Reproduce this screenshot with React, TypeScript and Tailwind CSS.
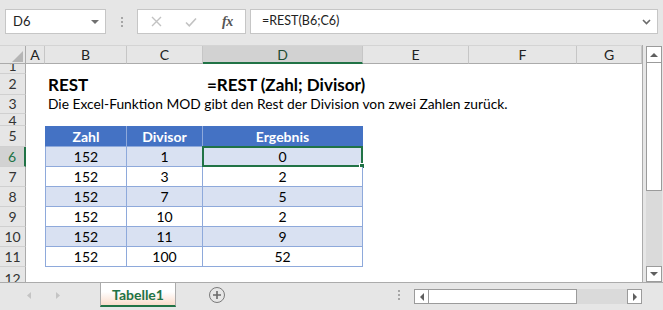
import React from 'react';

const cols = [
  { l: 'A', w: 'w-[19px]' },
  { l: 'B', w: 'w-[82px]' },
  { l: 'C', w: 'w-[76px]' },
  { l: 'D', w: 'w-[160px]' },
  { l: 'E', w: 'w-[106px]' },
  { l: 'F', w: 'w-[108px]' },
  { l: 'G', w: 'w-[65px]' },
];

function RowHead({ n, sel, cls }: { n: string; sel?: boolean; cls?: string }) {
  return (
    <div
      className={
        'w-[26px] shrink-0 flex justify-center overflow-hidden border-b border-[#d0d0d0] text-[14px] ' +
        (sel
          ? 'bg-[#d2d2d2] border-r-2 border-r-[#217346] text-[#217346] '
          : 'bg-[#e6e6e6] border-r border-r-[#ababab] text-[#333] ') +
        (cls ?? 'items-center')
      }
    >
      <span className="leading-none">{n}</span>
    </div>
  );
}

function TableRow({
  n,
  vals,
  band,
  sel,
}: {
  n: string;
  vals: string[];
  band?: boolean;
  sel?: boolean;
}) {
  const bg = band ? 'bg-[#d9e1f2]' : 'bg-white';
  return (
    <div className="flex h-[20px] shrink-0">
      <RowHead n={n} sel={sel} />
      <div className="w-[19px] shrink-0" />
      <div className={`w-[82px] shrink-0 ${bg} border-l border-r border-b border-[#8ea9db] flex items-center justify-center text-[14px]`}>
        {vals[0]}
      </div>
      <div className={`w-[76px] shrink-0 ${bg} border-r border-b border-[#8ea9db] flex items-center justify-center text-[14px]`}>
        {vals[1]}
      </div>
      <div className={`relative w-[160px] shrink-0 ${bg} border-r border-b border-[#8ea9db] flex items-center justify-center text-[14px]`}>
        {vals[2]}
        {sel && (
          <>
            <div className="absolute -left-px -top-px -right-px -bottom-px border-2 border-[#217346]" />
            <div className="absolute -right-[3px] -bottom-[3px] w-[6px] h-[6px] bg-[#217346] border border-white" />
          </>
        )}
      </div>
    </div>
  );
}

function Toolbar() {
  return (
    <div className="h-[45px] shrink-0 flex items-start pt-[9px] pl-[5px]">
      <div className="w-[101px] h-[25px] bg-white border border-[#c6c6c6] flex items-center pl-[7px] pr-[6px] text-[13px] text-[#222]">
        <span className="flex-1">D6</span>
        <svg width="8" height="4" viewBox="0 0 8 4">
          <path d="M0 0h8L4 4z" fill="#707070" />
        </svg>
      </div>
      <div className="w-[31px] h-[25px] flex flex-col items-center justify-center gap-[2px]">
        <div className="w-[2px] h-[2px] bg-[#a6a6a6]" />
        <div className="w-[2px] h-[2px] bg-[#a6a6a6]" />
        <div className="w-[2px] h-[2px] bg-[#a6a6a6]" />
      </div>
      <div className="w-[109px] h-[25px] bg-white border border-[#c6c6c6] flex items-center pl-[13px]">
        <svg width="11" height="11" viewBox="0 0 11 11">
          <path d="M1 1L10 10M10 1L1 10" stroke="#c2c2c2" strokeWidth="1.4" />
        </svg>
        <svg width="12" height="10" viewBox="0 0 12 10" className="ml-[23px]">
          <path d="M1 5.5L4.3 8.8L11 1.5" stroke="#c2c2c2" strokeWidth="1.6" fill="none" />
        </svg>
        <span className="ml-[25px] text-[14px] italic font-bold text-[#555] font-['Liberation_Serif',serif] leading-none tracking-[-0.5px]">
          fx
        </span>
      </div>
      <div className="ml-[4px] w-[408px] h-[25px] bg-white border border-[#c6c6c6] flex items-center pl-[11px] pr-[6px] text-[12.5px] text-[#222]">
        <span className="flex-1">=REST(B6;C6)</span>
        <svg width="9" height="6" viewBox="0 0 9 6">
          <path d="M1 1L4.5 4.5L8 1" stroke="#6b6b6b" strokeWidth="1.6" fill="none" />
        </svg>
      </div>
    </div>
  );
}

function Sheet() {
  return (
    <div className="w-[643px] shrink-0 flex flex-col bg-white border-r border-[#ababab] overflow-hidden">
      {/* column header */}
      <div className="flex h-[19px] shrink-0 bg-[#e6e6e6] border-t border-[#d4d4d4]">
        <div className="w-[26px] shrink-0 border-r border-b border-[#ababab] relative">
          <svg width="12" height="12" viewBox="0 0 12 12" className="absolute left-[12px] top-[5px]">
            <path d="M11 0V11H0z" fill="#b5b5b5" />
          </svg>
        </div>
        {cols.map((c) => (
          <div
            key={c.l}
            className={
              `${c.w} shrink-0 flex items-center justify-center text-[14px] border-r border-[#c6c6c6] ` +
              (c.l === 'D'
                ? 'bg-[#d2d2d2] border-b-2 border-b-[#217346] text-[#1e4d33]'
                : 'border-b border-b-[#ababab] text-[#222]')
            }
          >
            {c.l}
          </div>
        ))}
      </div>

      {/* row 1 */}
      <div className="flex h-[10px] shrink-0">
        <RowHead n="1" cls="items-end" />
      </div>

      {/* row 2 */}
      <div className="flex h-[21px] shrink-0">
        <RowHead n="2" />
        <div className="w-[19px] shrink-0" />
        <div className="w-[82px] shrink-0 flex items-center pl-[3px] whitespace-nowrap text-[17px] font-bold">
          REST
        </div>
        <div className="w-[76px] shrink-0" />
        <div className="w-[160px] shrink-0 flex items-center pl-[4px] whitespace-nowrap text-[17px] font-bold">
          =REST (Zahl; Divisor)
        </div>
      </div>

      {/* row 3 */}
      <div className="flex h-[19px] shrink-0">
        <RowHead n="3" />
        <div className="w-[19px] shrink-0" />
        <div className="w-[82px] shrink-0 flex items-center pl-[3px] whitespace-nowrap text-[13.8px]">
          Die Excel-Funktion MOD gibt den Rest der Division von zwei Zahlen zurück.
        </div>
      </div>

      {/* row 4 */}
      <div className="flex h-[12px] shrink-0">
        <RowHead n="4" cls="items-start" />
      </div>

      {/* row 5 - table header */}
      <div className="flex h-[21px] shrink-0">
        <RowHead n="5" />
        <div className="w-[19px] shrink-0" />
        <div className="w-[82px] shrink-0 bg-[#4472c4] border-l border-l-[#4472c4] border-r border-r-[#8ea9db] border-b border-b-[#8ea9db] flex items-center justify-center text-[14px] font-bold text-white">
          Zahl
        </div>
        <div className="w-[76px] shrink-0 bg-[#4472c4] border-r border-r-[#8ea9db] border-b border-b-[#8ea9db] flex items-center justify-center text-[14px] font-bold text-white">
          Divisor
        </div>
        <div className="w-[160px] shrink-0 bg-[#4472c4] border-r border-r-[#4472c4] border-b border-b-[#8ea9db] flex items-center justify-center text-[14px] font-bold text-white">
          Ergebnis
        </div>
      </div>

      <TableRow n="6" vals={['152', '1', '0']} band sel />
      <TableRow n="7" vals={['152', '3', '2']} />
      <TableRow n="8" vals={['152', '7', '5']} band />
      <TableRow n="9" vals={['152', '10', '2']} />
      <TableRow n="10" vals={['152', '11', '9']} band />
      <TableRow n="11" vals={['152', '100', '52']} />

      {/* row 12 */}
      <div className="flex flex-1">
        <RowHead n="12" cls="items-start pt-[5px]" />
      </div>
    </div>
  );
}

function VScroll() {
  return (
    <div className="w-[20px] shrink-0 pl-[3px] pt-[1px]">
      <div className="w-[16px] h-[236px] flex flex-col">
        <div className="h-[17px] shrink-0 bg-white border border-[#9b9b9b] flex items-center justify-center">
          <svg width="8" height="4" viewBox="0 0 8 4">
            <path d="M0 4L4 0L8 4z" fill="#5f5f5f" />
          </svg>
        </div>
        <div className="h-[128px] shrink-0 bg-white border-x border-b border-[#9b9b9b]" />
        <div className="flex-1 bg-[#dadada]" />
        <div className="h-[16px] shrink-0 bg-white border border-[#9b9b9b] flex items-center justify-center">
          <svg width="8" height="4" viewBox="0 0 8 4">
            <path d="M0 0L4 4L8 0z" fill="#5f5f5f" />
          </svg>
        </div>
      </div>
    </div>
  );
}

function BottomBar() {
  return (
    <div className="h-[28px] shrink-0 border-t border-[#ababab] flex items-start">
      <div className="w-[100px] h-[24px] shrink-0 flex items-center pl-[27px]">
        <svg width="4" height="7" viewBox="0 0 4 7">
          <path d="M4 0V7L0 3.5z" fill="#c4c4c4" />
        </svg>
        <svg width="4" height="7" viewBox="0 0 4 7" className="ml-[25px]">
          <path d="M0 0V7L4 3.5z" fill="#c4c4c4" />
        </svg>
      </div>
      <div className="w-[76px] h-[24px] shrink-0 border-x border-[#ababab] border-b-2 border-b-[#217346] bg-linear-to-b from-white from-40% to-[#f9dccb] flex items-center justify-center text-[14px] font-bold text-[#217346]">
        Tabelle1
      </div>
      <div className="ml-[33px] mt-[4px] w-[16px] h-[16px] rounded-full border-[1.5px] border-[#7a7a7a] flex items-center justify-center">
        <svg width="8" height="8" viewBox="0 0 8 8">
          <path d="M4 0V8M0 4H8" stroke="#6a6a6a" strokeWidth="1.6" />
        </svg>
      </div>
      <div className="ml-[173px] mt-[7px] flex flex-col gap-[2px]">
        <div className="w-[2px] h-[2px] bg-[#a6a6a6]" />
        <div className="w-[2px] h-[2px] bg-[#a6a6a6]" />
        <div className="w-[2px] h-[2px] bg-[#a6a6a6]" />
      </div>
      <div className="ml-[14px] mt-[6px] w-[228px] h-[15px] flex">
        <div className="w-[15px] shrink-0 bg-white border border-[#9b9b9b] flex items-center justify-center">
          <svg width="4" height="8" viewBox="0 0 4 8">
            <path d="M4 0V8L0 4z" fill="#5f5f5f" />
          </svg>
        </div>
        <div className="w-[148px] shrink-0 bg-white border-y border-r border-[#9b9b9b]" />
        <div className="flex-1 bg-[#dadada]" />
        <div className="w-[15px] shrink-0 bg-white border border-[#9b9b9b] flex items-center justify-center">
          <svg width="4" height="8" viewBox="0 0 4 8">
            <path d="M0 0V8L4 4z" fill="#5f5f5f" />
          </svg>
        </div>
      </div>
    </div>
  );
}

export default function App() {
  return (
    <div className="w-[663px] h-[310px] bg-[#e6e6e6] overflow-hidden flex flex-col font-['Lato',sans-serif] text-black select-none">
      <Toolbar />
      <div className="flex h-[237px] shrink-0">
        <Sheet />
        <VScroll />
      </div>
      <BottomBar />
    </div>
  );
}
